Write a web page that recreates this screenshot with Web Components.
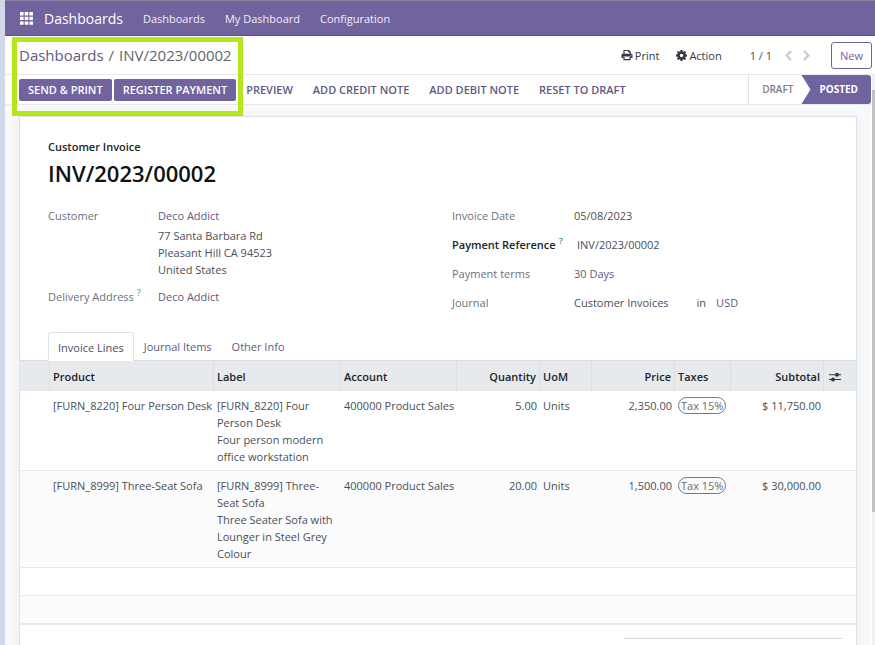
<!DOCTYPE html>
<html lang="en">
<head>
<meta charset="utf-8">
<meta name="viewport" content="width=device-width, initial-scale=1">
<title>INV/2023/00002</title>
<style>
    body {
        margin: 0;
        font-family: "Open Sans", "Noto Sans", sans-serif;
        font-size: 11px;
        line-height: 17px;
        color: #495057;
        --brand: #71639e;
        --brand-dark: #5b4f80;
        --link: #5f5a80;
        --muted: #6c7278;
        --dark: #212529;
        --line: #dee2e6;
    }
</style>
</head>
<body>
<invoice-app>
    <app-navbar slot="nav" brand="Dashboards">
        <a href="#dashboards">Dashboards</a>
        <a href="#my">My Dashboard</a>
        <a href="#configuration">Configuration</a>
    </app-navbar>
    <control-panel slot="panel" parent="Dashboards" current="INV/2023/00002"></control-panel>
    <status-bar></status-bar>
    <invoice-sheet>
        <field-group class="left">
            <field-row label="Customer">
                <a href="#partner">Deco Addict</a>
                <address>77 Santa Barbara Rd<br>Pleasant Hill CA 94523<br>United States</address>
            </field-row>
            <field-row label="Delivery Address" help><a href="#delivery">Deco Addict</a></field-row>
        </field-group>
        <field-group class="right">
            <field-row label="Invoice Date">05/08/2023</field-row>
            <field-row label="Payment Reference" help input="INV/2023/00002"></field-row>
            <field-row label="Payment terms"><a href="#terms">30 Days</a></field-row>
            <field-row label="Journal"><span>Customer Invoices</span><span class="in">in</span><a href="#usd">USD</a></field-row>
        </field-group>
        <tab-bar slot="tabs" tabs="Invoice Lines,Journal Items,Other Info"></tab-bar>
        <invoice-lines slot="lines"></invoice-lines>
    </invoice-sheet>
</invoice-app>

<script>
class InvoiceApp extends HTMLElement {
    connectedCallback() {
        this.attachShadow({ mode: 'open' }).innerHTML = `
            <style>
                :host {
                    display: flex;
                    flex-direction: column;
                    box-sizing: border-box;
                    height: 100vh;
                    border-left: 5px solid #cfd9e9;
                    background: #fff;
                    position: relative;
                    overflow: hidden;
                }
                .body {
                    display: flex;
                    flex: 1;
                    min-height: 0;
                }
                main {
                    flex: 1;
                    min-width: 0;
                    overflow: auto;
                    scrollbar-width: none;
                    background: #f8f9fb;
                }
                .track {
                    box-sizing: border-box;
                    width: 3px;
                    margin-left: 1px;
                    padding-top: 15px;
                    background: #f0f0f1;
                }
                .thumb {
                    height: 76%;
                    background: #c1c1c1;
                }
                /* highlight drawn over the breadcrumb and main buttons */
                .mark {
                    position: absolute;
                    left: 7px;
                    top: 37px;
                    box-sizing: border-box;
                    width: 231px;
                    height: 79px;
                    border: 5px solid #b5e61d;
                    pointer-events: none;
                }
            </style>
            <slot name="nav"></slot>
            <slot name="panel"></slot>
            <div class="body">
                <main><slot></slot></main>
                <div class="track"><div class="thumb"></div></div>
            </div>
            <div class="mark"></div>
        `;
    }
}

class AppNavbar extends HTMLElement {
    connectedCallback() {
        this.attachShadow({ mode: 'open' }).innerHTML = `
            <style>
                :host {
                    display: flex;
                    align-items: center;
                    box-sizing: border-box;
                    height: 36px;
                    padding-left: 15px;
                    background: var(--brand);
                    border-top: 1px solid #8a83a3;
                    border-bottom: 1px solid var(--brand-dark);
                    color: #fff;
                }
                button {
                    display: flex;
                    padding: 0;
                    border: 0;
                    background: none;
                }
                .brand {
                    margin: 0 20px 0 11px;
                    font-size: 14px;
                    color: #fff;
                    text-decoration: none;
                }
                nav {
                    display: flex;
                    gap: 20px;
                }
                ::slotted(a) {
                    color: #f1eff6;
                    text-decoration: none;
                }
            </style>
            <button aria-label="Apps">
                <svg width="13" height="13" viewBox="0 0 13 13" fill="#fff">
                    <path d="M0 0h3.6v3.4H0zM4.7 0h3.6v3.4H4.7zM9.4 0H13v3.4H9.4zM0 4.7h3.6v3.4H0zM4.7 4.7h3.6v3.4H4.7zM9.4 4.7H13v3.4H9.4zM0 9.4h3.6v3.4H0zM4.7 9.4h3.6v3.4H4.7zM9.4 9.4H13v3.4H9.4z"/>
                </svg>
            </button>
            <a class="brand" href="#home">${this.getAttribute('brand')}</a>
            <nav><slot></slot></nav>
        `;
    }
}

class ControlPanel extends HTMLElement {
    connectedCallback() {
        this.attachShadow({ mode: 'open' }).innerHTML = `
            <style>
                :host {
                    display: flex;
                    align-items: center;
                    box-sizing: border-box;
                    height: 39px;
                    padding: 0 3px 0 14px;
                    border-bottom: 1px solid #e7e9ed;
                    background: #fff;
                }
                .crumbs {
                    display: flex;
                    flex: 1;
                    gap: 5px;
                    font-size: 15px;
                    color: #5f666d;
                }
                .crumbs a {
                    color: var(--link);
                    text-decoration: none;
                }
                button {
                    display: flex;
                    align-items: center;
                    gap: 2px;
                    padding: 0;
                    border: 0;
                    background: none;
                    font: inherit;
                    color: #343a40;
                    font-weight: 500;
                }
                .action {
                    margin-left: 17px;
                }
                .pager {
                    margin: 0 13px 0 28px;
                }
                .arrow {
                    margin-right: 11px;
                }
                .new {
                    box-sizing: border-box;
                    height: 27px;
                    margin-left: 10px;
                    padding: 0 8px;
                    border: 1px solid var(--brand);
                    border-radius: 3px;
                    color: var(--brand);
                }
            </style>
            <div class="crumbs"><a href="#back">${this.getAttribute('parent')}</a><span>/</span><span>${this.getAttribute('current')}</span></div>
            <button>
                <svg width="12" height="12" viewBox="0 0 12 12">
                    <path d="M3 5V1.5h4.8L9.2 3v2" fill="none" stroke="#343a40" stroke-width="1.2"/>
                    <path d="M7.4 1v2.4h2.2z" fill="#343a40"/>
                    <path d="M1.8 4.8h8.4q1.3 0 1.3 1.3v3H9.6V7.6H2.4v1.5H.5v-3q0-1.3 1.3-1.3z" fill="#343a40"/>
                    <path d="M3 8v2.7h6V8" fill="none" stroke="#343a40" stroke-width="1.2"/>
                    <circle cx="10" cy="6.2" r=".5" fill="#fff"/>
                </svg>
                Print
            </button>
            <button class="action">
                <svg width="11" height="11" viewBox="0 0 11 11">
                    <g fill="#343a40">
                        <circle cx="5.5" cy="5.5" r="4"/>
                        <path d="M4.5 0h2l.4 2.4H4.1zM4.5 11h2l.4-2.4H4.1z"/>
                        <path transform="rotate(45 5.5 5.5)" d="M4.5 0h2l.4 2.4H4.1zM4.5 11h2l.4-2.4H4.1z"/>
                        <path transform="rotate(90 5.5 5.5)" d="M4.5 0h2l.4 2.4H4.1zM4.5 11h2l.4-2.4H4.1z"/>
                        <path transform="rotate(135 5.5 5.5)" d="M4.5 0h2l.4 2.4H4.1zM4.5 11h2l.4-2.4H4.1z"/>
                    </g>
                    <circle cx="5.5" cy="5.5" r="1.7" fill="#fff"/>
                </svg>
                Action
            </button>
            <span class="pager">1 / 1</span>
            <button class="arrow" aria-label="Previous">
                <svg width="7" height="11" viewBox="0 0 7 11" fill="none" stroke="#c4c7cc" stroke-width="2"><path d="M6 1L1.6 5.5 6 10"/></svg>
            </button>
            <button class="arrow" aria-label="Next">
                <svg width="7" height="11" viewBox="0 0 7 11" fill="none" stroke="#c4c7cc" stroke-width="2"><path d="M1 1l4.4 4.5L1 10"/></svg>
            </button>
            <button class="new">New</button>
        `;
    }
}

class StatusBar extends HTMLElement {
    connectedCallback() {
        this.attachShadow({ mode: 'open' }).innerHTML = `
            <style>
                :host {
                    display: flex;
                    align-items: stretch;
                    box-sizing: border-box;
                    height: 30px;
                    padding-left: 14px;
                    border-bottom: 1px solid #e7e9ed;
                    background: #fff;
                }
                .buttons {
                    display: flex;
                    flex: 1;
                    align-items: center;
                    gap: 2px;
                }
                button {
                    box-sizing: border-box;
                    height: 22px;
                    padding: 0 8px;
                    border: 0;
                    background: none;
                    font: inherit;
                    font-weight: 600;
                    white-space: nowrap;
                    color: var(--link);
                }
                .primary {
                    padding: 0 9px;
                    border-radius: 2px;
                    background: var(--brand);
                    color: #fff;
                }
                .steps {
                    display: flex;
                    border-left: 1px solid var(--line);
                }
                .steps button {
                    height: 29px;
                    padding: 0 8px 0 13px;
                    font-size: 10px;
                    color: #7c8288;
                }
                .steps .current {
                    padding: 0 13px 0 18px;
                    border-radius: 0 3px 3px 0;
                    background: var(--brand);
                    color: #fff;
                    font-weight: 700;
                    clip-path: polygon(0 0, 100% 0, 100% 100%, 0 100%, 9px 50%);
                }
                .plain {
                    display: flex;
                    gap: 4px;
                }
            </style>
            <div class="buttons">
                <button class="primary">SEND &amp; PRINT</button>
                <button class="primary">REGISTER PAYMENT</button>
                <div class="plain">
                    <button>PREVIEW</button>
                    <button>ADD CREDIT NOTE</button>
                    <button>ADD DEBIT NOTE</button>
                    <button>RESET TO DRAFT</button>
                </div>
            </div>
            <div class="steps">
                <button>DRAFT</button>
                <button class="current">POSTED</button>
            </div>
        `;
    }
}

class InvoiceSheet extends HTMLElement {
    connectedCallback() {
        this.attachShadow({ mode: 'open' }).innerHTML = `
            <style>
                :host {
                    display: block;
                    margin: 11px 14px 0;
                    border: 1px solid var(--line);
                    background: #fff;
                    box-shadow: 0 0 10px rgba(40, 50, 80, 0.06);
                }
                .head {
                    padding: 21px 0 0 28px;
                }
                .type {
                    color: var(--dark);
                    font-weight: 600;
                }
                h1 {
                    margin: 2px 0 18px;
                    font-size: 22px;
                    line-height: 32px;
                    font-weight: 600;
                    color: #111;
                }
                .fields {
                    display: grid;
                    grid-template-columns: 1fr 1fr;
                }
                .totals {
                    width: 218px;
                    height: 60px;
                    margin: 13px 14px 0 auto;
                    border-top: 1px solid #d5d8dc;
                }
            </style>
            <div class="head">
                <div class="type">Customer Invoice</div>
                <h1>INV/2023/00002</h1>
                <div class="fields"><slot></slot></div>
            </div>
            <slot name="tabs"></slot>
            <slot name="lines"></slot>
            <div class="totals"></div>
        `;
    }
}

class FieldGroup extends HTMLElement {
    connectedCallback() {
        this.attachShadow({ mode: 'open' }).innerHTML = `
            <style>
                :host {
                    display: flex;
                    flex-direction: column;
                    gap: 12px;
                    --label-width: 122px;
                }
                :host(.left) {
                    gap: 10px;
                    --label-width: 110px;
                }
            </style>
            <slot></slot>
        `;
    }
}

class FieldRow extends HTMLElement {
    connectedCallback() {
        const label = this.getAttribute('label');
        const value = this.getAttribute('input');
        const help = this.hasAttribute('help') ? '<sup>?</sup>' : '';

        this.attachShadow({ mode: 'open' }).innerHTML = `
            <style>
                :host {
                    display: flex;
                }
                .label {
                    flex: none;
                    width: var(--label-width);
                    font-weight: 500;
                    color: var(--muted);
                    white-space: nowrap;
                }
                label.label {
                    font-weight: 600;
                    color: var(--dark);
                }
                sup {
                    margin-left: 3px;
                    font-size: 9px;
                    line-height: 0;
                    color: #2f8f9d;
                }
                input {
                    width: 100%;
                    box-sizing: border-box;
                    height: 17px;
                    padding: 0 3px;
                    border: 0;
                    background: none;
                    font: inherit;
                    color: inherit;
                }
                ::slotted(a) {
                    color: var(--link);
                    text-decoration: none;
                }
                ::slotted(address) {
                    margin-top: 3px;
                    font-style: normal;
                }
                ::slotted(.in) {
                    margin: 0 10px 0 28px;
                }
            </style>
            ${value
                ? `<label class="label" for="field">${label}${help}</label><div><input id="field" value="${value}"></div>`
                : `<span class="label">${label}${help}</span><div><slot></slot></div>`}
        `;
    }
}

class TabBar extends HTMLElement {
    connectedCallback() {
        const tabs = this.getAttribute('tabs').split(',');
        this.attachShadow({ mode: 'open' }).innerHTML = `
            <style>
                :host {
                    display: flex;
                    margin-top: 21px;
                    padding-left: 28px;
                }
                button {
                    box-sizing: border-box;
                    height: 28px;
                    padding: 0 9px;
                    border: 1px solid transparent;
                    border-bottom: 0;
                    background: none;
                    font: inherit;
                    color: var(--link);
                }
                button[aria-selected="true"] {
                    height: 29px;
                    margin-bottom: -1px;
                    border-color: var(--line);
                    border-radius: 3px 3px 0 0;
                    background: #fff;
                    color: #495057;
                    position: relative;
                }
            </style>
            ${tabs.map((tab, i) => `<button role="tab" aria-selected="${i === 0}">${tab}</button>`).join('')}
        `;
        this.setAttribute('role', 'tablist');
    }
}

const LINES = [
    {
        product: '[FURN_8220] Four Person Desk',
        label: '[FURN_8220] Four Person Desk<br>Four person modern office workstation',
        account: '400000 Product Sales', qty: '5.00', uom: 'Units',
        price: '2,350.00', tax: 'Tax 15%', subtotal: '$ 11,750.00'
    },
    {
        product: '[FURN_8999] Three-Seat Sofa',
        label: '[FURN_8999] Three-Seat Sofa<br>Three Seater Sofa with Lounger in Steel Grey Colour',
        account: '400000 Product Sales', qty: '20.00', uom: 'Units',
        price: '1,500.00', tax: 'Tax 15%', subtotal: '$ 30,000.00'
    }
];

class InvoiceLines extends HTMLElement {
    connectedCallback() {
        this.attachShadow({ mode: 'open' }).innerHTML = `
            <style>
                :host {
                    display: block;
                }
                table {
                    width: 100%;
                    table-layout: fixed;
                    border-collapse: separate;
                    border-spacing: 0;
                    border-bottom: 1px solid #e7e9ec;
                }
                th, td {
                    padding: 6px 3px 5px;
                    text-align: left;
                    vertical-align: top;
                }
                th {
                    padding: 7px 3px 6px;
                    border-top: 1px solid #d8dce0;
                    border-right: 1px solid #dce0e4;
                    background: #e7eaed;
                    color: var(--dark);
                    font-weight: 600;
                }
                th:last-child {
                    border-right: 0;
                }
                .num {
                    text-align: right;
                }
                td {
                    border-bottom: 1px solid #e7e9ec;
                    white-space: nowrap;
                }
                tbody tr:nth-child(even) {
                    background: #fbfbfc;
                }
                td.label {
                    white-space: normal;
                }
                .spacer td {
                    height: 27px;
                    padding: 0;
                }
                .tax {
                    display: inline-block;
                    box-sizing: border-box;
                    height: 17px;
                    padding: 0 2px;
                    border: 1px solid #75797d;
                    border-radius: 9px;
                    line-height: 15px;
                    color: #666b70;
                }
                button {
                    display: flex;
                    align-items: center;
                    height: 17px;
                    padding: 0 2px;
                    border: 0;
                    background: none;
                }
                .c-handle { width: 30px; }
                .c-product { width: 164px; }
                .c-account { width: 116px; }
                .c-num { width: 83px; }
                .c-uom { width: 52px; }
                .c-tax { width: 56px; }
                .c-sub { width: 93px; }
                .c-opt { width: 32px; }
            </style>
            <table>
                <colgroup>
                    <col class="c-handle"><col class="c-product"><col><col class="c-account">
                    <col class="c-num"><col class="c-uom"><col class="c-num"><col class="c-tax">
                    <col class="c-sub"><col class="c-opt">
                </colgroup>
                <thead>
                    <tr>
                        <th></th><th>Product</th><th>Label</th><th>Account</th>
                        <th class="num">Quantity</th><th>UoM</th><th class="num">Price</th>
                        <th>Taxes</th><th class="num">Subtotal</th>
                        <th>
                            <button aria-label="Optional columns">
                                <svg width="12" height="10" viewBox="0 0 12 10" fill="#343a40">
                                    <path d="M0 2.3h12v1H0zM0 6.9h12v1H0z"/>
                                    <circle cx="8" cy="2.7" r="2"/>
                                    <circle cx="4" cy="7.4" r="2"/>
                                </svg>
                            </button>
                        </th>
                    </tr>
                </thead>
                <tbody>
                    ${LINES.map(line => `
                        <tr>
                            <td></td>
                            <td>${line.product}</td>
                            <td class="label">${line.label}</td>
                            <td>${line.account}</td>
                            <td class="num">${line.qty}</td>
                            <td>${line.uom}</td>
                            <td class="num">${line.price}</td>
                            <td><span class="tax">${line.tax}</span></td>
                            <td class="num">${line.subtotal}</td>
                            <td></td>
                        </tr>`).join('')}
                    <tr class="spacer"><td colspan="10"></td></tr>
                    <tr class="spacer"><td colspan="10"></td></tr>
                </tbody>
            </table>
        `;
    }
}

customElements.define('invoice-app', InvoiceApp);
customElements.define('app-navbar', AppNavbar);
customElements.define('control-panel', ControlPanel);
customElements.define('status-bar', StatusBar);
customElements.define('invoice-sheet', InvoiceSheet);
customElements.define('field-group', FieldGroup);
customElements.define('field-row', FieldRow);
customElements.define('tab-bar', TabBar);
customElements.define('invoice-lines', InvoiceLines);
</script>
</body>
</html>
